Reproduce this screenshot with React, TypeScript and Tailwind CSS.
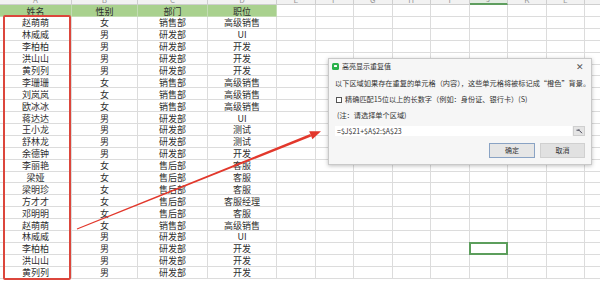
import React from 'react';

const ROWS: [string, string, string, string][] = [
  ['赵萌萌', '女', '销售部', '高级销售'],
  ['林威威', '男', '研发部', 'UI'],
  ['李柏柏', '男', '研发部', '开发'],
  ['洪山山', '男', '研发部', '开发'],
  ['黄列列', '男', '研发部', '开发'],
  ['李珊珊', '女', '销售部', '高级销售'],
  ['刘岚岚', '女', '销售部', '高级销售'],
  ['欧冰冰', '女', '销售部', '高级销售'],
  ['蒋达达', '男', '研发部', 'UI'],
  ['王小龙', '男', '研发部', '测试'],
  ['舒林龙', '男', '研发部', '测试'],
  ['余德钟', '男', '研发部', '开发'],
  ['李丽艳', '女', '售后部', '客服'],
  ['梁娅', '女', '售后部', '客服'],
  ['梁明珍', '女', '售后部', '客服'],
  ['方才才', '女', '售后部', '客服经理'],
  ['邓明明', '女', '售后部', '客服'],
  ['赵萌萌', '女', '销售部', '高级销售'],
  ['林威威', '男', '研发部', 'UI'],
  ['李柏柏', '男', '研发部', '开发'],
  ['洪山山', '男', '研发部', '开发'],
  ['黄列列', '男', '研发部', '开发'],
];

const MAIN_W = ['w-[72px]', 'w-[66px]', 'w-[70px]', 'w-[69px]'];
const EXTRA = ['E', 'F', 'G', 'H', 'I', 'J', 'K', 'L', 'M'];
const font = { fontFamily: '"Noto Sans CJK SC", "Noto Sans", sans-serif' };

function Cell({ w, children, className = '' }: { w: string; children?: React.ReactNode; className?: string }) {
  return (
    <div className={`${w} shrink-0 h-full flex items-center justify-center border-r border-b border-[#dcdcdc] ${className}`}>
      {children}
    </div>
  );
}

export default function App() {
  return (
    <div lang="zh-CN" className="relative w-[600px] h-[283px] overflow-hidden bg-white text-[#2e2e2e]" style={font}>
      {/* column letters strip, mostly scrolled out of view */}
      <div className="flex h-[5px] bg-[#f2f2f2] overflow-hidden">
        {['A', 'B', 'C', 'D'].map((l, i) => (
          <div key={l} className={`${MAIN_W[i]} shrink-0 h-full border-r border-b border-[#cfcfcf] flex items-end justify-center overflow-hidden`}>
            <span className="text-[8px] leading-[8px] text-[#999]">{l}</span>
          </div>
        ))}
        {EXTRA.map((l) => (
          <div
            key={l}
            className={`w-[38.5px] shrink-0 h-full border-r flex items-end justify-center overflow-hidden ${
              l === 'J' ? 'bg-[#e3ece3] border-b-2 border-b-[#5f9e5f] border-r-[#cfcfcf]' : 'border-b border-[#cfcfcf]'
            }`}
          >
            <span className="text-[8px] leading-[8px] text-[#999]">{l}</span>
          </div>
        ))}
      </div>

      {/* header row */}
      <div className="flex h-[12px] text-[9px] leading-none">
        {['姓名', '性别', '部门', '职位'].map((h, i) => (
          <Cell key={h} w={MAIN_W[i]} className="bg-[#a9d18e] border-r-[#c3dcb3] border-b-[#c3dcb3] pt-px">
            {h}
          </Cell>
        ))}
        {EXTRA.map((l) => (
          <Cell key={l} w="w-[38.5px]" />
        ))}
      </div>

      {/* data rows */}
      {ROWS.map((r, ri) => (
        <div key={ri} className="flex h-[11.9px] text-[9px] leading-none">
          {r.map((v, ci) => (
            <Cell key={ci} w={MAIN_W[ci]} className="pt-px">
              {v}
            </Cell>
          ))}
          {EXTRA.map((l) => (
            <Cell key={l} w="w-[38.5px]" className="relative">
              {l === 'J' && ri === 19 && <div className="absolute -inset-px border-2 border-[#5c9e5c]" />}
            </Cell>
          ))}
        </div>
      ))}

      {/* red highlight box */}
      <div className="absolute left-[3px] top-[15px] w-[68px] h-[265px] border-2 border-[#dc463c] rounded-[2px]" />

      {/* arrow */}
      <svg className="absolute inset-0 pointer-events-none" width="600" height="283" viewBox="0 0 600 283">
        <polygon points="76.8,228.5 77.2,229.5 311.2,136.4 310.2,134.0" fill="#e2382c" />
        <polygon points="321,131.2 312.4,139.2 309.2,131.2" fill="#e2382c" />
      </svg>

      {/* dialog */}
      <div className="absolute left-[328px] top-[58px] w-[264px] h-[107px] bg-[#f6f6f6] border border-[#c9c9c9] shadow-[0_1px_4px_rgba(0,0,0,0.25)] flex flex-col text-[#333]">
        <div className="h-[14px] flex items-center pl-[3px] pr-[7px]">
          <div className="w-[7px] h-[7px] rounded-[1.5px] bg-[#2bb24c] flex items-center justify-center">
            <div className="w-[3px] h-[2px] bg-white rounded-[0.5px]" />
          </div>
          <span className="ml-[3px] text-[7px] leading-none">高亮显示重复值</span>
          <span className="ml-auto text-[9px] leading-none text-[#555]">✕</span>
        </div>
        <div className="px-[6px] flex flex-col text-[7.2px] leading-none">
          <div className="mt-[6px] h-[10px] flex items-center whitespace-nowrap">
            以下区域如果存在重复的单元格（内容），这些单元格将被标记成“橙色”背景。
          </div>
          <div className="mt-[6px] h-[10px] flex items-center whitespace-nowrap">
            <div className="w-[6px] h-[6px] ml-[1px] border border-[#555] bg-white" />
            <span className="ml-[3px]">精确匹配15位以上的长数字（例如：身份证、银行卡）(S)</span>
          </div>
          <div className="mt-[6px] h-[10px] flex items-center whitespace-nowrap pl-[2px]">
            (注：请选择单个区域)
          </div>
          <div className="mt-[5px] h-[10px] flex">
            <div className="flex-1 bg-white flex items-center pl-[2px] text-[7px]">=$J$21+$A$2:$A$23</div>
            <div className="w-[12px] ml-[1px] bg-[#e4e4e4] border border-[#cfcfcf] flex items-center justify-center">
              <svg width="7" height="5" viewBox="0 0 7 5">
                <path d="M0.5 1.2 L3 1.2 L3 0.3 M3 1.2 L6 4.2" stroke="#445" strokeWidth="1" fill="none" />
              </svg>
            </div>
          </div>
          <div className="mt-[7px] h-[15px] flex justify-end gap-[5px]">
            <div className="w-[46px] h-full bg-[#e6e6e6] border border-[#8aa3c4] flex items-center justify-center text-[7px]">确定</div>
            <div className="w-[45px] h-full bg-[#e1e1e1] border border-[#d0d0d0] flex items-center justify-center text-[7px]">取消</div>
          </div>
        </div>
      </div>
    </div>
  );
}
